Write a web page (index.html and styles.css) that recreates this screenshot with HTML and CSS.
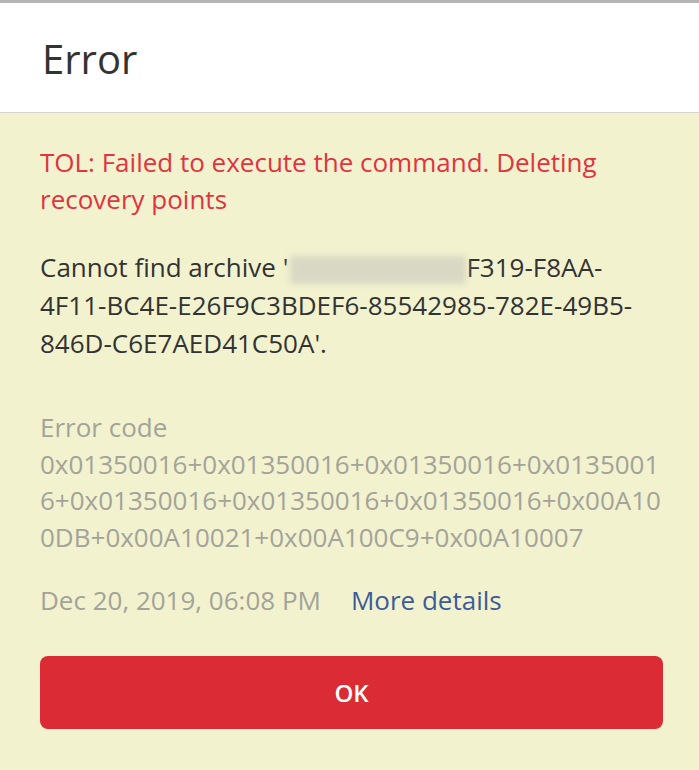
FILE: index.html
```html
<!doctype html>
<html>
  <head>
    <meta charset="utf-8" />
    <title>Error</title>
    <meta name="viewport" content="width=device-width, initial-scale=1.0" />
    <link rel="stylesheet" href="styles.css">
  </head>
  <body>
    <div class="dialog">
      <div class="dialog-header">
        <h1 class="dialog-title">Error</h1>
      </div>
      <div class="dialog-body">
        <p class="error-summary">TOL: Failed to execute the command. Deleting recovery points</p>
        <p class="error-message">Cannot find archive '<span class="redacted"></span>F319-F8AA-4F11-BC4E-E26F9C3BDEF6-85542985-782E-49B5-846D-C6E7AED41C50A'.</p>
        <div class="error-code">
          <div>Error code</div>
          <div class="code-value">0x01350016+0x01350016+0x01350016+0x01350016+0x01350016+0x01350016+0x01350016+0x00A100DB+0x00A10021+0x00A100C9+0x00A10007</div>
        </div>
        <div class="error-meta">
          <span class="timestamp">Dec 20, 2019, 06:08 PM</span>
          <a href="#" class="details-link">More details</a>
        </div>
        <button class="ok-button">OK</button>
      </div>
    </div>
  </body>
</html>
```

FILE: styles.css
```css
:root {
  --font-normal: "Open Sans", "Noto Sans", "Liberation Sans", sans-serif;
  --color-bg: #f2f2cf;
  --color-text: #333333;
  --color-muted: #a3a39a;
  --color-error: #e0343f;
  --color-link: #3d5b99;
  --color-button: #db2c35;
}
* {
  margin: 0;
  padding: 0;
  box-sizing: border-box;
}
html,
body {
  height: 100%;
  overflow: hidden;
  background: var(--color-bg);
  font-family: var(--font-normal);
  color: var(--color-text);
}
.dialog {
  height: 100%;
  display: flex;
  flex-direction: column;
  border-top: 3px solid #b5b5b5;
}
.dialog-header {
  height: 110px;
  display: flex;
  align-items: center;
  padding: 0 42px;
  background: #ffffff;
  border-bottom: 1px solid #d4d4ce;
}
.dialog-title {
  font-size: 40px;
  font-weight: 400;
  color: #333333;
  padding-top: 2px;
}
.dialog-body {
  display: flex;
  flex-direction: column;
  padding: 31px 36px 0 40px;
  font-size: 26px;
}
.error-summary {
  color: var(--color-error);
  line-height: 37px;
}
.error-message {
  margin-top: 30px;
  line-height: 38px;
}
.redacted {
  display: inline-block;
  vertical-align: middle;
  width: 176px;
  height: 28px;
  margin-left: 2px;
  background: #d8d8c4;
  filter: blur(3px);
}
.error-code {
  margin-top: 47px;
  color: var(--color-muted);
  line-height: 36.5px;
}
.code-value {
  word-break: break-all;
}
.error-meta {
  margin-top: 27px;
  display: flex;
  gap: 30px;
  line-height: 36px;
}
.timestamp {
  color: var(--color-muted);
}
.details-link {
  color: var(--color-link);
  text-decoration: none;
}
.ok-button {
  margin-top: 38px;
  height: 73px;
  border: none;
  border-radius: 8px;
  background: var(--color-button);
  color: #ffffff;
  font-family: var(--font-normal);
  font-size: 24px;
  font-weight: 600;
}
```
